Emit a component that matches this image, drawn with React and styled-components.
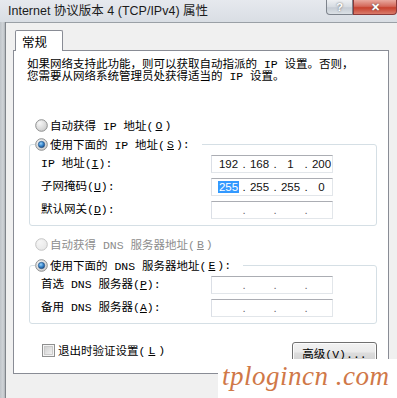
import React from 'react';
import styled, { createGlobalStyle } from 'styled-components';

const Global = createGlobalStyle`
  html, body { margin: 0; padding: 0; background: #f0f0f0; }
  body { font-family: "Liberation Mono", "Noto Sans CJK SC", monospace; color: #000; }
  * { box-sizing: border-box; }
`;

const Window = styled.div`
  width: 397px;
  height: 398px;
  position: relative;
  overflow: hidden;
  display: flex;
  flex-direction: column;
  background: #f0f0f0;
`;

const TitleBar = styled.div`
  height: 22px;
  flex: none;
  display: flex;
  align-items: flex-start;
  background: linear-gradient(to bottom, #e6e9ee 0%, #d9dee4 100%);
`;

const Title = styled.div`
  flex: 1;
  padding-left: 8px;
  line-height: 22px;
  font-family: "Liberation Sans", "Noto Sans CJK SC", sans-serif;
  font-size: 12.5px;
  color: #1b1b1b;
  white-space: nowrap;
`;

const CaptionButton = styled.div`
  height: 15px;
  width: ${p => p.$w}px;
  display: flex;
  align-items: center;
  justify-content: center;
  border: 1px solid ${p => (p.$close ? '#8a3a3a' : '#7d838c')};
  border-top: none;
  border-radius: ${p => (p.$close ? '0 0 4px 0' : '0 0 0 4px')};
  background: ${p =>
    p.$close
      ? 'linear-gradient(to bottom, #e9a99f 0%, #d4695b 45%, #c7412e 55%, #d97b6b 100%)'
      : 'linear-gradient(to bottom, #eef0f3 0%, #d6dbe1 50%, #c6ccd4 55%, #dce1e6 100%)'};
  color: #fff;
  font-family: "Liberation Sans", sans-serif;
  font-weight: bold;
  font-size: 11px;
  text-shadow: 0 0 2px #555;
`;

const Body = styled.div`
  flex: 1;
  display: flex;
  min-height: 0;
`;

const LeftFrame = styled.div`
  width: 6px;
  flex: none;
  background: linear-gradient(to right, #bfc4c9 0%, #d0d4d8 60%, #b0b5ba 100%);
  border-right: 1px solid #80858b;
`;

const Client = styled.div`
  flex: 1;
  border-top: 1px solid #9aa0a6;
  padding: 7px 0 0 7px;
  background: #f0f0f0;
  display: flex;
  flex-direction: column;
  align-items: flex-start;
`;

const Tab = styled.div`
  margin-left: 2px;
  width: 48px;
  height: 21px;
  margin-bottom: -1px;
  position: relative;
  z-index: 1;
  background: #fff;
  border: 1px solid #898c95;
  border-bottom: none;
  border-radius: 2px 2px 0 0;
  padding-left: 6px;
  font-family: "Noto Sans CJK SC", sans-serif;
  font-size: 12.5px;
  line-height: 21px;
`;

const Panel = styled.div`
  width: 376px;
  height: 324px;
  background: #fff;
  border: 1px solid #898c95;
  padding: 8px 11px 0 0;
  display: flex;
  flex-direction: column;
  align-items: flex-start;
  font-size: 11.5px;
`;

const Intro = styled.p`
  margin: 0 0 0 13px;
  line-height: 11.5px;
  white-space: nowrap;
`;

const RadioRow = styled.label`
  display: flex;
  align-items: center;
  gap: 2px;
  height: 18px;
  margin: ${p => p.$m || '0'};
  color: ${p => (p.$disabled ? '#8d8d8d' : '#000')};
  white-space: nowrap;
`;

const Group = styled.fieldset`
  margin: ${p => p.$m || '0'} 0 0 15px;
  width: 348px;
  border: 1px solid #d5dfe5;
  border-radius: 3px;
  padding: 0;
  min-width: 0;
`;

const Legend = styled.legend`
  margin-left: 5px;
  padding: 0 12px 0 0;
`;

const Rows = styled.div`
  display: grid;
  grid-template-columns: 170px 122px;
  row-gap: 5px;
  padding: 2px 0 6px 11px;
  align-items: center;
`;

const FieldLabel = styled.span`
  white-space: nowrap;
  line-height: 18px;
`;

const IpBox = styled.div`
  width: 122px;
  height: 18px;
  border: 1px solid #e2e6ea;
  border-top-color: #abadb3;
  border-left-color: #dbdfe6;
  background: #fff;
  display: flex;
  align-items: center;
  padding-left: 4px;
  overflow: hidden;
  font-family: "Liberation Sans", sans-serif;
  font-size: 11.5px;
  color: #111;
`;

const Seg = styled.span`
  width: 25px;
  flex: none;
  text-align: center;
`;

const Sel = styled.span`
  background: #3399ff;
  color: #fff;
  padding: 0 1px;
`;

const Dot = styled.span`
  width: 6px;
  flex: none;
  text-align: center;
  color: ${p => (p.$empty ? '#6b6b6b' : '#111')};
`;

const Bottom = styled.div`
  margin: 18px 0 0 28px;
  width: calc(100% - 28px);
  display: flex;
  justify-content: space-between;
  align-items: flex-start;
`;

const CheckRow = styled.label`
  display: flex;
  align-items: center;
  gap: 3px;
  height: 16px;
  white-space: nowrap;
`;

const Button = styled.button`
  width: 85px;
  height: 22px;
  border: 1px solid #707070;
  border-radius: 3px;
  background: linear-gradient(to bottom, #f2f2f2 0%, #ebebeb 45%, #dddddd 50%, #cfcfcf 100%);
  font-family: "Liberation Mono", "Noto Sans CJK SC", monospace;
  font-size: 11.5px;
  color: #000;
  padding: 0;
  box-shadow: inset 0 0 0 1px #fcfcfc;
`;

const Watermark = styled.div`
  position: absolute;
  left: 218px;
  top: 359px;
  right: 0;
  bottom: 0;
  background: #fff;
  padding-left: 4px;
  font-family: "Liberation Serif", "DejaVu Serif", serif;
  font-style: italic;
  font-size: 27px;
  line-height: 34px;
  letter-spacing: 0.5px;
  color: #d07848;
  white-space: nowrap;
`;

const U = styled.span`
  text-decoration: underline;
`;

function Radio({ checked, disabled }) {
  const ring = disabled ? '#c4c4c4' : '#8e8f8f';
  const id = `rf${checked ? 1 : 0}${disabled ? 1 : 0}`;
  return (
    <svg width="13" height="13" viewBox="0 0 13 13" style={{ flex: 'none' }}>
      <defs>
        <radialGradient id={id} cx="0.35" cy="0.3" r="0.8">
          <stop offset="0" stopColor={disabled ? '#f6f6f6' : '#f7f7f7'} />
          <stop offset="1" stopColor={disabled ? '#e6e6e6' : '#c9c9c9'} />
        </radialGradient>
        <radialGradient id="rdot" cx="0.4" cy="0.35" r="0.7">
          <stop offset="0" stopColor="#9fd3f7" />
          <stop offset="0.5" stopColor="#3a8ad0" />
          <stop offset="1" stopColor="#17447e" />
        </radialGradient>
      </defs>
      <circle cx="6.5" cy="6.5" r="5.8" fill={`url(#${id})`} stroke={ring} strokeWidth="1" />
      {checked && <circle cx="6.5" cy="6.5" r="3.2" fill="url(#rdot)" stroke="#234f7e" strokeWidth="0.6" />}
    </svg>
  );
}

function Checkbox() {
  return (
    <svg width="13" height="13" viewBox="0 0 13 13" style={{ flex: 'none' }}>
      <defs>
        <linearGradient id="cbg" x1="0" y1="0" x2="1" y2="1">
          <stop offset="0" stopColor="#cfcfcf" />
          <stop offset="1" stopColor="#f2f2f2" />
        </linearGradient>
      </defs>
      <rect x="0.5" y="0.5" width="12" height="12" fill="#f4f4f4" stroke="#8e8f8f" />
      <rect x="2.5" y="2.5" width="8" height="8" fill="url(#cbg)" stroke="#c3c3c3" strokeWidth="0.8" />
    </svg>
  );
}

function IpField({ values = ['', '', '', ''], selected = -1 }) {
  const empty = values.every(v => v === '');
  const out = [];
  values.forEach((v, i) => {
    out.push(<Seg key={`s${i}`}>{i === selected ? <Sel>{v}</Sel> : v}</Seg>);
    if (i < 3) out.push(<Dot key={`d${i}`} $empty={empty}>.</Dot>);
  });
  return <IpBox>{out}</IpBox>;
}

export default function App() {
  return (
    <Window>
      <Global />
      <TitleBar>
        <Title>Internet 协议版本 4 (TCP/IPv4) 属性</Title>
        <CaptionButton $w={27}>?</CaptionButton>
        <CaptionButton $w={44} $close>✕</CaptionButton>
      </TitleBar>
      <Body>
        <LeftFrame />
        <Client>
          <Tab>常规</Tab>
          <Panel>
            <Intro>
              如果网络支持此功能，则可以获取自动指派的 IP 设置。否则，
              <br />
              您需要从网络系统管理员处获得适当的 IP 设置。
            </Intro>

            <RadioRow $m="34px 0 0 21px">
              <Radio />
              自动获得 IP 地址(<U>O</U>)
            </RadioRow>
            <Group $m="1px">
              <Legend>
                <RadioRow>
                  <Radio checked />
                  使用下面的 IP 地址(<U>S</U>):
                </RadioRow>
              </Legend>
              <Rows>
                <FieldLabel>IP 地址(<U>I</U>):</FieldLabel>
                <IpField values={['192', '168', '1', '200']} />
                <FieldLabel>子网掩码(<U>U</U>):</FieldLabel>
                <IpField values={['255', '255', '255', '0']} selected={0} />
                <FieldLabel>默认网关(<U>D</U>):</FieldLabel>
                <IpField />
              </Rows>
            </Group>

            <RadioRow $m="9px 0 0 21px" $disabled>
              <Radio disabled />
              自动获得 DNS 服务器地址(<U>B</U>)
            </RadioRow>
            <Group $m="3px">
              <Legend>
                <RadioRow>
                  <Radio checked />
                  使用下面的 DNS 服务器地址(<U>E</U>):
                </RadioRow>
              </Legend>
              <Rows>
                <FieldLabel>首选 DNS 服务器(<U>P</U>):</FieldLabel>
                <IpField />
                <FieldLabel>备用 DNS 服务器(<U>A</U>):</FieldLabel>
                <IpField />
              </Rows>
            </Group>

            <Bottom>
              <CheckRow>
                <Checkbox />
                退出时验证设置(<U>L</U>)
              </CheckRow>
              <Button>高级(<U>V</U>)...</Button>
            </Bottom>
          </Panel>
        </Client>
      </Body>
      <Watermark>tplogincn .com</Watermark>
    </Window>
  );
}
